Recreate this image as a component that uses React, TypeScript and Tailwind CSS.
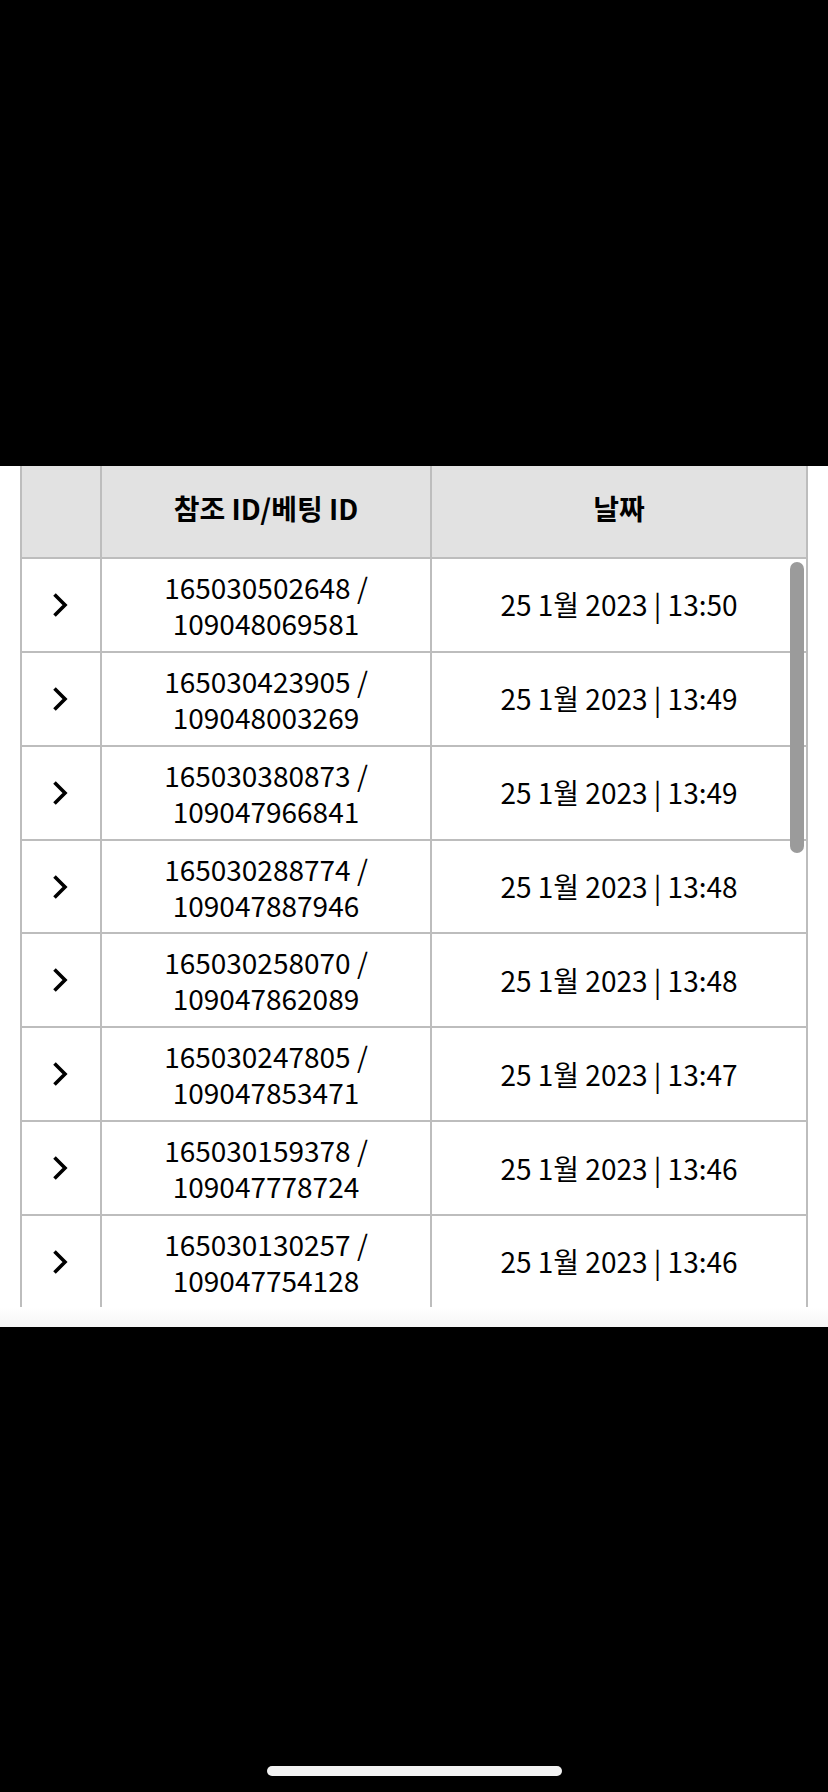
import React from "react";

const rows = [
  ["165030502648", "109048069581", "25 1월 2023 | 13:50"],
  ["165030423905", "109048003269", "25 1월 2023 | 13:49"],
  ["165030380873", "109047966841", "25 1월 2023 | 13:49"],
  ["165030288774", "109047887946", "25 1월 2023 | 13:48"],
  ["165030258070", "109047862089", "25 1월 2023 | 13:48"],
  ["165030247805", "109047853471", "25 1월 2023 | 13:47"],
  ["165030159378", "109047778724", "25 1월 2023 | 13:46"],
  ["165030130257", "109047754128", "25 1월 2023 | 13:46"],
];

function Chevron() {
  return (
    <svg width="18" height="26" viewBox="0 0 18 26" fill="none">
      <path d="M3.5 2.5 L14 13 L3.5 23.5" stroke="#000" strokeWidth="3.6" strokeLinecap="butt" strokeLinejoin="miter" />
    </svg>
  );
}

export default function App() {
  const font = { fontFamily: '"Noto Sans CJK KR", "Noto Sans", sans-serif' };
  return (
    <div className="w-[828px] h-[1792px] bg-black flex flex-col" style={font}>
      <div className="h-[466px] shrink-0" />
      <div className="relative h-[861px] bg-white flex flex-col shrink-0">
        <div className="h-[841px] overflow-hidden pl-[20px]">
          <div className="w-[788px] border-l-2 border-[#bdbdbd] text-black">
            <div className="grid grid-cols-[80px_330px_376px] h-[93px] bg-[#e2e2e2] border-b-2 border-[#bdbdbd]">
              <div className="border-r-2 border-[#bdbdbd]" />
              <div className="border-r-2 border-[#bdbdbd] flex items-center justify-center text-[28px] font-bold leading-[36px] pb-[8px]">
                참조 ID/베팅 ID
              </div>
              <div className="border-r-2 border-[#bdbdbd] flex items-center justify-center text-[28px] font-bold leading-[36px] pb-[8px]">
                날짜
              </div>
            </div>
            {rows.map((r, i) => (
              <div key={i} className="grid grid-cols-[80px_330px_376px] h-[93.86px] border-b-2 border-[#bdbdbd]">
                <div className="border-r-2 border-[#bdbdbd] flex items-center justify-center pr-[2px]">
                  <Chevron />
                </div>
                <div className="border-r-2 border-[#bdbdbd] flex flex-col items-center justify-center text-[28px] leading-[36px]">
                  <span>{r[0]} /</span>
                  <span>{r[1]}</span>
                </div>
                <div className="border-r-2 border-[#bdbdbd] flex items-center justify-center text-[28px] leading-[36px] pb-[1px]">
                  {r[2]}
                </div>
              </div>
            ))}
          </div>
        </div>
        <div className="h-[20px] bg-gradient-to-b from-white to-[#f6f6f6]" />
        <div className="absolute left-[790px] top-[96px] w-[14px] h-[291px] rounded-full bg-[#9b9b9b]" />
      </div>
      <div className="flex-1 flex items-end justify-center pb-[16px]">
        <div className="w-[295px] h-[10px] rounded-full bg-[#f2f2f2]" />
      </div>
    </div>
  );
}
